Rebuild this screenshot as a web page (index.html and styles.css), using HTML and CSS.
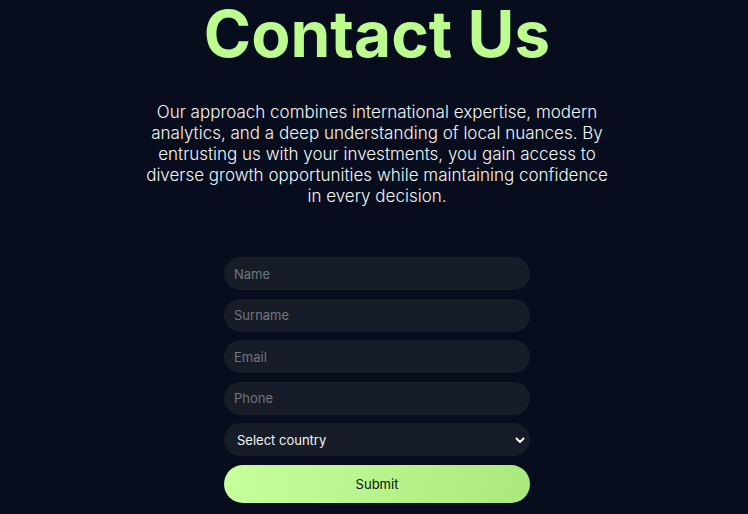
FILE: index.html
```html
<!DOCTYPE html>
<html lang="en">
<head>
<meta charset="utf-8">
<title>Contact Us</title>
<link rel="stylesheet" href="styles.css">
</head>
<body>
<main class="contact">
  <h1 class="title">Contact Us</h1>
  <p class="lead">Our approach combines international expertise, modern analytics, and a deep understanding of local nuances. By entrusting us with your investments, you gain access to diverse growth opportunities while maintaining confidence in every decision.</p>
  <form class="form">
    <input class="field" type="text" placeholder="Name">
    <input class="field" type="text" placeholder="Surname">
    <input class="field" type="email" placeholder="Email">
    <input class="field" type="tel" placeholder="Phone">
    <div class="select-wrap">
      <select class="field select">
        <option>Select country</option>
      </select>
      <svg class="chev" width="10" height="7" viewBox="0 0 10 7"><path d="M1.5 1.5 L5 5 L8.5 1.5" fill="none" stroke="#fff" stroke-width="2" stroke-linecap="round" stroke-linejoin="round"/></svg>
    </div>
    <button class="submit" type="button">Submit</button>
  </form>
</main>
</body>
</html>
```
FILE: styles.css
```css
html, body {
  margin: 0;
  padding: 0;
  background: #070d1c;
}
body {
  font-family: Inter, "Noto Sans", sans-serif;
  color: #fff;
  height: 514px;
  overflow: hidden;
}
.contact {
  display: flex;
  flex-direction: column;
  align-items: center;
  padding-left: 6px;
}
.title {
  margin: -5.5px 0 0;
  font-size: 64px;
  line-height: 77px;
  font-weight: 700;
  color: #bdfc8f;
  letter-spacing: 0;
}
.lead {
  margin: 30.5px 0 0;
  width: 470px;
  text-align: center;
  font-size: 17px;
  line-height: 21px;
  font-weight: 300;
  color: #f4f6f8;
}
.form {
  margin-top: 50px;
  width: 306px;
  display: flex;
  flex-direction: column;
  gap: 8.6px;
}
.field {
  box-sizing: border-box;
  width: 100%;
  height: 33px;
  border: none;
  outline: none;
  border-radius: 17px;
  background: #161c28;
  padding: 0 10px;
  font-family: Inter, "Noto Sans", sans-serif;
  font-size: 13px;
  color: #fff;
}
.field::placeholder {
  color: #717780;
}
.select-wrap {
  position: relative;
}
.select {
  appearance: none;
  -webkit-appearance: none;
  padding-left: 13px;
  color: #f4f4f4;
}
.chev {
  position: absolute;
  right: 5px;
  top: 14px;
  pointer-events: none;
}
.submit {
  height: 38px;
  border: none;
  border-radius: 19px;
  background: linear-gradient(100deg, #c6ff9c 0%, #a9e97d 100%);
  font-family: Inter, "Noto Sans", sans-serif;
  font-size: 13px;
  color: #0a0f0a;
}
```
